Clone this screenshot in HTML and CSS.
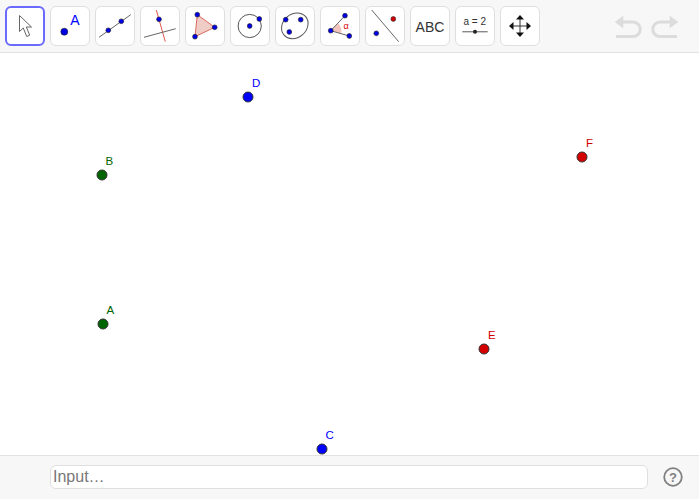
FILE: index.html
```html
<!DOCTYPE html>
<html lang="en">
<head>
<meta charset="utf-8">
<title>Geometry</title>
<link rel="stylesheet" href="styles.css">
</head>
<body>
<div class="app">
  <header class="toolbar">
    <div class="tool selected">
      <svg class="icon" viewBox="0 0 40 40"><path class="cursor" d="M14.500 9.500V25.500L18.300 22L21.700 30.500L24.700 29.200L21.300 21H26.500Z"/></svg>
    </div>
    <div class="tool">
      <svg class="icon" viewBox="0 0 40 40"><circle class="pt blue" cx="14.300" cy="25.700" r="3.500"/><text class="icon-a" x="20.200" y="19">A</text></svg>
    </div>
    <div class="tool">
      <svg class="icon" viewBox="0 0 40 40"><line class="ln" x1="4" y1="31.300" x2="35.700" y2="8.700"/><circle class="pt blue" cx="13.300" cy="24.300" r="2.400"/><circle class="pt blue" cx="26.300" cy="15.300" r="2.400"/></svg>
    </div>
    <div class="tool">
      <svg class="icon" viewBox="0 0 40 40"><line class="ln-red" x1="16.300" y1="4" x2="25.300" y2="35.700"/><line class="ln" x1="4" y1="31.300" x2="35.700" y2="22.700"/><circle class="pt blue" cx="19" cy="13.300" r="2.400"/></svg>
    </div>
    <div class="tool">
      <svg class="icon" viewBox="0 0 40 40"><polygon class="area" points="12.300,8.700 29.700,21.300 10,30.700"/><circle class="pt blue" cx="12.300" cy="8.700" r="2.400"/><circle class="pt blue" cx="29.700" cy="21.300" r="2.400"/><circle class="pt blue" cx="10" cy="30.700" r="2.400"/></svg>
    </div>
    <div class="tool">
      <svg class="icon" viewBox="0 0 40 40"><circle class="curve" cx="19.700" cy="20" r="11.600"/><circle class="pt blue" cx="19.700" cy="20" r="2.400"/><circle class="pt blue" cx="29.300" cy="13" r="2.400"/></svg>
    </div>
    <div class="tool">
      <svg class="icon" viewBox="0 0 40 40"><ellipse class="curve" cx="19.800" cy="19.800" rx="14.200" ry="11.800" transform="rotate(-40 19.800 19.800)"/><circle class="pt blue" cx="10.700" cy="13.700" r="2.400"/><circle class="pt blue" cx="25.700" cy="13.700" r="2.400"/><circle class="pt blue" cx="14.300" cy="26" r="2.400"/></svg>
    </div>
    <div class="tool">
      <svg class="icon" viewBox="0 0 40 40"><path class="wedge" d="M10.700 24.700L18 17.300A10.500 10.500 0 0 1 21 27.500Z"/><line class="ln" x1="10.700" y1="24.700" x2="25" y2="9.700"/><line class="ln" x1="10.700" y1="24.700" x2="29.300" y2="30"/><circle class="pt blue" cx="10.700" cy="24.700" r="2.400"/><circle class="pt blue" cx="25" cy="9.700" r="2.400"/><circle class="pt blue" cx="29.300" cy="30" r="2.400"/><text class="icon-alpha" x="23.500" y="23">α</text></svg>
    </div>
    <div class="tool">
      <svg class="icon" viewBox="0 0 40 40"><line class="ln" x1="6.700" y1="4" x2="33.700" y2="35.700"/><circle class="pt red" cx="28.300" cy="13" r="2.400"/><circle class="pt blue" cx="11.300" cy="27.300" r="2.400"/></svg>
    </div>
    <div class="tool">
      <svg class="icon" viewBox="0 0 40 40"><text class="icon-abc" x="20" y="25.600">ABC</text></svg>
    </div>
    <div class="tool">
      <svg class="icon" viewBox="0 0 40 40"><text class="icon-slider" x="19.700" y="19">a = 2</text><line class="slider-line" x1="7.300" y1="25.700" x2="32.700" y2="25.700"/><circle class="slider-knob" cx="20" cy="25.700" r="2"/></svg>
    </div>
    <div class="tool">
      <svg class="icon" viewBox="0 0 40 40"><path class="move-line" d="M20 12V28M12 20H28"/><path class="move-head" d="M20 9L24 13.500H16ZM20 31L16 26.500H24ZM9 20L13.500 16V24ZM31 20L26.500 24V16Z"/></svg>
    </div>
    <div class="history">
      <svg class="history-icon" viewBox="0 0 28 24"><path class="history-fill" d="M0.700 7L9.300 0.700V13.300Z"/><path class="history-line" d="M8 7H19A7 7 0 0 1 19 21.500H2"/></svg>
      <svg class="history-icon flip" viewBox="0 0 28 24"><path class="history-fill" d="M0.700 7L9.300 0.700V13.300Z"/><path class="history-line" d="M8 7H19A7 7 0 0 1 19 21.500H2"/></svg>
    </div>
  </header>

  <main class="canvas">
    <svg class="plot" viewBox="0 0 699 402">
      <g class="green">
        <circle class="point" cx="102" cy="122" r="5"/>
        <text class="label" x="105.500" y="112">B</text>
        <circle class="point" cx="103" cy="271" r="5"/>
        <text class="label" x="106.500" y="261">A</text>
      </g>
      <g class="bluep">
        <circle class="point" cx="248" cy="44" r="5"/>
        <text class="label" x="252" y="34">D</text>
        <circle class="point" cx="322" cy="396" r="5"/>
        <text class="label" x="325.500" y="386">C</text>
      </g>
      <g class="redp">
        <circle class="point" cx="582" cy="104" r="5"/>
        <text class="label" x="586" y="94">F</text>
        <circle class="point" cx="484" cy="296" r="5"/>
        <text class="label" x="488" y="286">E</text>
      </g>
    </svg>
  </main>

  <footer class="inputbar">
    <input class="input" type="text" placeholder="Input…">
    <svg class="help" viewBox="0 0 20 20"><circle class="help-ring" cx="10" cy="10" r="8.800"/><text class="help-mark" x="10" y="14.500">?</text></svg>
  </footer>
</div>
</body>
</html>
```

FILE: styles.css
```css
* {
  box-sizing: border-box;
}

html,
body {
  margin: 0;
  background: #fff;
}

body {
  font-family: "Liberation Sans", Arial, sans-serif;
}

.app {
  width: 699px;
  height: 499px;
  display: flex;
  flex-direction: column;
}

.toolbar {
  height: 53px;
  flex: none;
  display: flex;
  gap: 5px;
  padding: 6px 5px 0;
  background: #f7f7f7;
  border-bottom: 1px solid #e2e2e2;
}

.tool {
  width: 40px;
  height: 40px;
  flex: none;
  display: flex;
  align-items: center;
  justify-content: center;
  background: #fff;
  border: 1px solid #dfdfdf;
  border-radius: 6px;
}

.tool.selected {
  border: 2px solid #6a6aff;
}

.icon {
  width: 40px;
  height: 40px;
  flex: none;
  display: block;
}

.cursor {
  fill: #fff;
  stroke: #666;
  stroke-width: 1;
}

.pt {
  stroke: #222;
  stroke-width: 0.6;
}

.blue {
  fill: #0000e6;
}

.red {
  fill: #d40000;
}

.ln {
  stroke: #666;
  stroke-width: 1;
}

.ln-red {
  stroke: #e0584c;
  stroke-width: 1;
}

.curve {
  fill: none;
  stroke: #555;
  stroke-width: 1;
}

.area {
  fill: #f0ccc6;
  stroke: #dc6a5e;
  stroke-width: 1;
}

.wedge {
  fill: #f2c4bc;
  stroke: none;
}

.icon-a {
  font-size: 14px;
  fill: #0000ff;
}

.icon-alpha {
  font-size: 9px;
  fill: #d40000;
}

.icon-abc {
  font-size: 14px;
  fill: #333;
  text-anchor: middle;
}

.icon-slider {
  font-size: 10px;
  fill: #333;
  text-anchor: middle;
}

.slider-line {
  stroke: #888;
  stroke-width: 1.400;
}

.slider-knob {
  fill: #222;
}

.move-line {
  fill: none;
  stroke: #333;
  stroke-width: 1;
}

.move-head {
  fill: #111;
}

.history {
  margin-left: auto;
  margin-right: 15px;
  margin-top: 9px;
  display: flex;
  gap: 9px;
  height: 24px;
}

.history-icon {
  width: 28px;
  height: 24px;
  display: block;
}

.history-icon.flip {
  transform: scaleX(-1);
}

.history-fill {
  fill: #dcdcdc;
}

.history-line {
  fill: none;
  stroke: #dcdcdc;
  stroke-width: 3;
}

.canvas {
  flex: 1;
  min-height: 0;
  background: #fff;
}

.plot {
  width: 699px;
  height: 402px;
  display: block;
}

.point {
  stroke: #333;
  stroke-width: 1;
}

.label {
  font-size: 11.500px;
  stroke: none;
}

.green {
  fill: #006400;
}

.bluep {
  fill: #0000ff;
}

.redp {
  fill: #d40000;
}

.inputbar {
  height: 44px;
  flex: none;
  display: flex;
  align-items: flex-start;
  padding: 9px 0 0 50px;
  background: #f7f7f7;
  border-top: 1px solid #e2e2e2;
}

.input {
  width: 598px;
  height: 24px;
  padding: 0 2px;
  background: #fff;
  border: 1px solid #dfdfdf;
  border-radius: 6px;
  font-family: "Liberation Sans", Arial, sans-serif;
  font-size: 16px;
}

.input::placeholder {
  color: #777;
  opacity: 1;
}

.help {
  width: 20px;
  height: 20px;
  margin: 2px 0 0 15px;
  display: block;
}

.help-ring {
  fill: none;
  stroke: #808080;
  stroke-width: 1.800;
}

.help-mark {
  font-size: 13px;
  font-weight: 700;
  fill: #808080;
  text-anchor: middle;
}
```
